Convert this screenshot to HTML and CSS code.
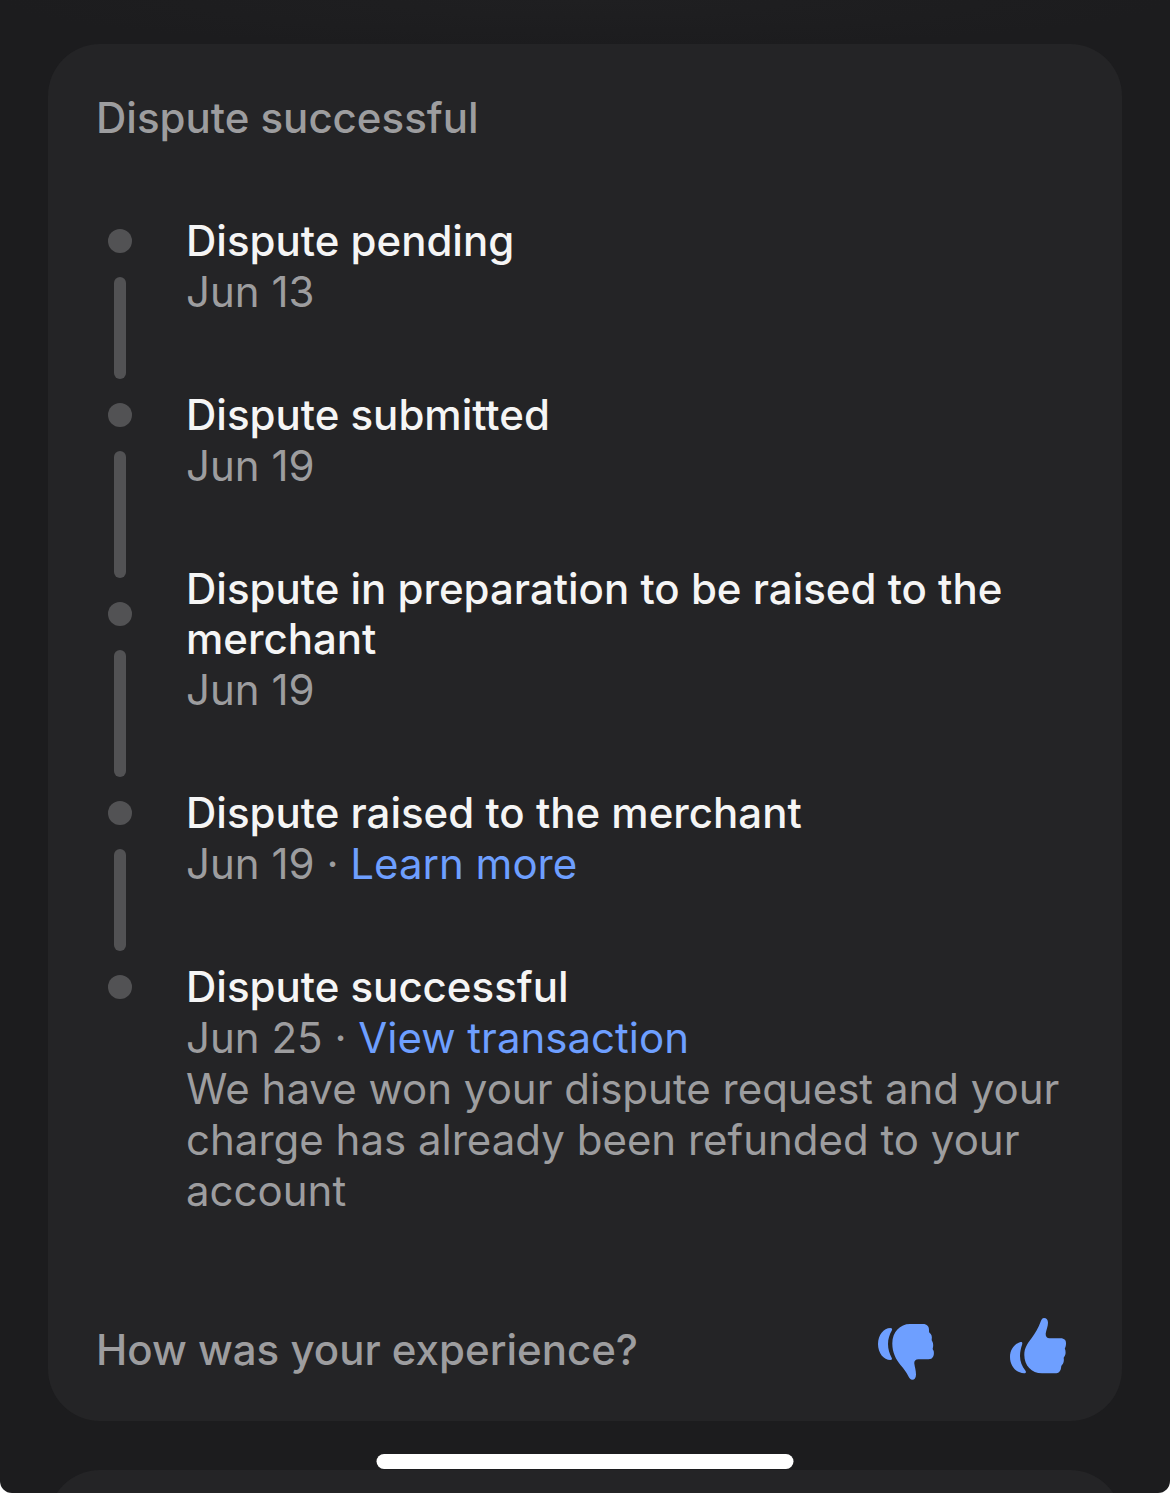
FILE: index.html
```
<!DOCTYPE html>
<html lang="en">
  <head>
    <meta charset="UTF-8" />
    <meta name="viewport" content="width=device-width, initial-scale=1.0" />
    <title>Dispute</title>
    <link rel="stylesheet" href="styles.css">
  </head>
  <body>
    <main class="screen">
      <section class="card">
        <h1 class="card-title">Dispute successful</h1>

        <!-- Timeline -->
        <ol class="timeline">
          <li class="step">
            <span class="dot"></span>
            <h2>Dispute pending</h2>
            <span class="line"></span>
            <div class="details">
              <p>Jun 13</p>
            </div>
          </li>
          <li class="step before-tall">
            <span class="dot"></span>
            <h2>Dispute submitted</h2>
            <span class="line"></span>
            <div class="details">
              <p>Jun 19</p>
            </div>
          </li>
          <li class="step tall">
            <span class="dot"></span>
            <h2>Dispute in preparation to be raised to the merchant</h2>
            <span class="line"></span>
            <div class="details">
              <p>Jun 19</p>
            </div>
          </li>
          <li class="step">
            <span class="dot"></span>
            <h2>Dispute raised to the merchant</h2>
            <span class="line"></span>
            <div class="details">
              <p>Jun 19 · <a href="#">Learn more</a></p>
            </div>
          </li>
          <li class="step last">
            <span class="dot"></span>
            <h2>Dispute successful</h2>
            <div class="details">
              <p>Jun 25 · <a href="#">View transaction</a></p>
              <p>We have won your dispute request and your charge has already been refunded to your account</p>
            </div>
          </li>
        </ol>

        <!-- Feedback -->
        <div class="feedback">
          <p>How was your experience?</p>
          <div class="thumbs">
            <button type="button" aria-label="Bad experience">
              <svg viewBox="0 0 72 72" aria-hidden="true">
                <path d="M20.500 15C13.500 15 8 22 8 31C8 40 13.500 47 20.500 47C22 47 22.500 46 21.500 44.500C19.500 41 18 36 18 31C18 26 19.500 21.500 21.800 17.500C22.600 16 22 15 20.500 15Z" />
                <path d="M40 11H53C57 11 59 13.500 59 17C59 18.500 59 19 59.500 19.700C61.500 21 62.300 23.500 61.700 26.500C61.700 27.500 62 28 62.500 28.700C63.500 31 63.300 33.500 62.700 35.500C62.700 36.500 63.200 37 63.700 38C64.500 42.500 63 46.300 58.500 46.300H48.500C45.500 46.300 44 48 44.300 50.500C44.800 54 46 57.500 46 61.500C46 65 44.500 66.700 42.300 66.700C40.500 66.700 39.500 65.500 38.500 63.500C36 58.500 33.500 55.500 30.500 52C26 46.500 22.300 39.500 22.300 30.500C22.300 19 30 11 40 11Z" />
              </svg>
            </button>
            <button type="button" aria-label="Good experience">
              <svg viewBox="0 0 72 72" aria-hidden="true">
                <path d="M18.500 29C12 31 8 37 8 44C8 53 14 60 22 60.300C24 60.300 24.500 59 23.300 57.500C20 53.500 18 48.500 18 43C18 38.500 19 35 20 32C20.700 29.800 20.200 28.700 18.500 29Z" />
                <path d="M42 5C44.500 5 46 7 46 9.700C46 13.500 44.200 17 43.700 20.500C43.400 23.500 45 25.300 47.500 25.300H58.500C62.500 25.300 64.300 27.500 64 31C63.900 33 63.500 34 62.800 35.500C63.800 38 63.900 40.500 63 42.500C62.500 43.300 62 44 61.700 44.800C62.300 48 61.500 50.500 60 52C59.300 52.700 59.200 53.500 59.100 54.500C58.700 58 57 60.300 53 60.300H40C29.500 60.300 22.300 52.500 22.300 42C22.300 35 25.500 30.500 29.500 25.300C33 20.500 36.500 14.500 38.500 9C39.500 6.500 40.300 5 42 5Z" />
              </svg>
            </button>
          </div>
        </div>
      </section>

      <section class="card next-card"></section>

      <div class="home-indicator"></div>
    </main>
  </body>
</html>
```
FILE: styles.css
```
* {
  margin: 0;
  padding: 0;
  box-sizing: border-box;
}

body {
  background: #fff;
  font-family: Inter, sans-serif;
  font-size: 42px;
  line-height: 51px;
  color: #9d9d9f;
}

.screen {
  position: relative;
  height: 100vh;
  padding: 44px 48px 0;
  overflow: hidden;
  background: #1c1c1e radial-gradient(ellipse 50% 48px at top, #1f1f21, #1c1c1e) no-repeat;
  border-radius: 0 0 12px 12px;
}

.card {
  padding: 48px 48px 36px;
  background: #242426;
  border-radius: 52px;
}

.card-title,
.feedback p {
  font-size: 42px;
  font-weight: 500;
}

.timeline {
  margin-top: 73px;
  list-style: none;
}

.step {
  display: grid;
  grid-template-columns: 48px 1fr;
  column-gap: 42px;
}

.step h2 {
  font-size: 42px;
  font-weight: 500;
  line-height: 50px;
  color: #f5f5f5;
}

.dot {
  width: 24px;
  height: 24px;
  border-radius: 50%;
  background: #525254;
  place-self: center;
}

.line {
  width: 12px;
  margin: 11px 0;
  border-radius: 6px;
  background: #525254;
  justify-self: center;
}

/* Lines reach further when the title next to the dot takes two rows */
.before-tall .line {
  margin-bottom: -14px;
}

.tall .line {
  margin-top: -14px;
}

.details {
  grid-column: 2;
  padding-bottom: 73px;
}

.last .details {
  padding-bottom: 0;
}

.step a {
  color: #6e9fff;
  text-decoration: none;
}

.feedback {
  display: flex;
  align-items: center;
  justify-content: space-between;
  margin-top: 97px;
}

.thumbs {
  display: flex;
  gap: 60px;
}

.thumbs button {
  width: 72px;
  height: 72px;
  border: none;
  background: none;
  cursor: pointer;
}

.thumbs svg {
  display: block;
  width: 100%;
  fill: #6e9fff;
}

.next-card {
  height: 160px;
  margin-top: 49px;
}

.home-indicator {
  position: absolute;
  bottom: 24px;
  left: 50%;
  width: 417px;
  height: 15px;
  border-radius: 8px;
  background: #fff;
  transform: translateX(-50%);
}
```
